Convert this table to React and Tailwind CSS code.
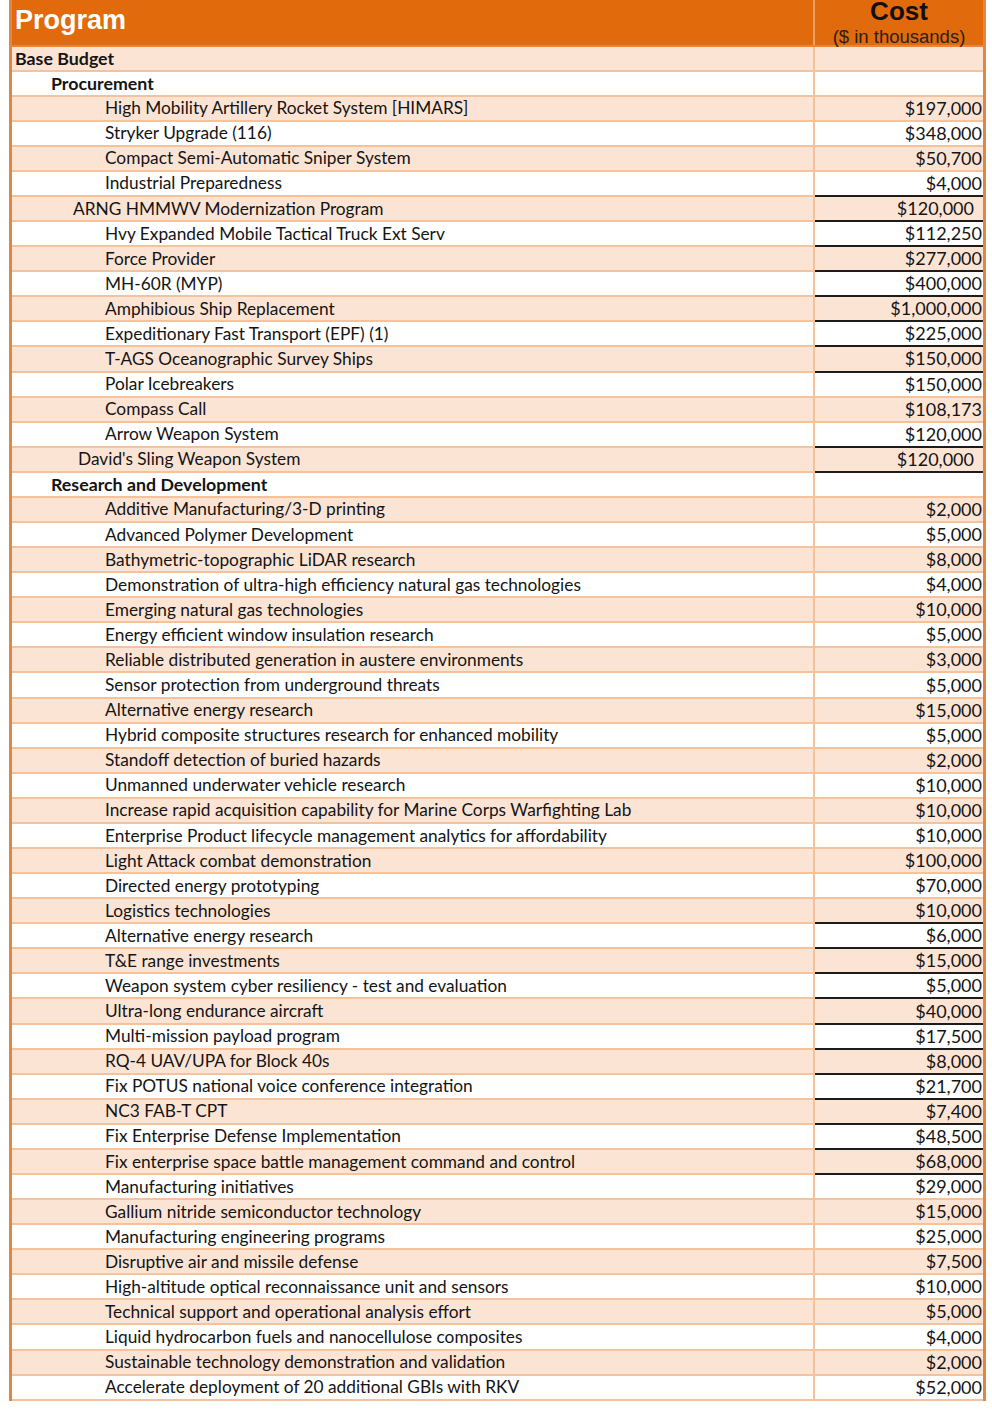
import React from "react";

// level: top / group / arng / sling, anything else = regular item
const rows = [
  { name: "Base Budget", level: "top", bold: true },
  { name: "Procurement", level: "group", bold: true },
  { name: "High Mobility Artillery Rocket System [HIMARS]", cost: "$197,000" },
  { name: "Stryker Upgrade (116)", cost: "$348,000" },
  { name: "Compact Semi-Automatic Sniper System", cost: "$50,700" },
  { name: "Industrial Preparedness", cost: "$4,000", dark: true },
  { name: "ARNG HMMWV Modernization Program", cost: "$120,000", level: "arng", pad: true, dark: true },
  { name: "Hvy Expanded Mobile Tactical Truck Ext Serv", cost: "$112,250", dark: true },
  { name: "Force Provider", cost: "$277,000", dark: true },
  { name: "MH-60R (MYP)", cost: "$400,000", dark: true },
  { name: "Amphibious Ship Replacement", cost: "$1,000,000", dark: true },
  { name: "Expeditionary Fast Transport (EPF) (1)", cost: "$225,000", dark: true },
  { name: "T-AGS Oceanographic Survey Ships", cost: "$150,000", dark: true },
  { name: "Polar Icebreakers", cost: "$150,000" },
  { name: "Compass Call", cost: "$108,173" },
  { name: "Arrow Weapon System", cost: "$120,000", dark: true },
  { name: "David's Sling Weapon System", cost: "$120,000", level: "sling", pad: true, dark: true },
  { name: "Research and Development", level: "group", bold: true },
  { name: "Additive Manufacturing/3-D printing", cost: "$2,000" },
  { name: "Advanced Polymer Development", cost: "$5,000" },
  { name: "Bathymetric-topographic LiDAR research", cost: "$8,000" },
  { name: "Demonstration of ultra-high efficiency natural gas technologies", cost: "$4,000" },
  { name: "Emerging natural gas technologies", cost: "$10,000" },
  { name: "Energy efficient window insulation research", cost: "$5,000" },
  { name: "Reliable distributed generation in austere environments", cost: "$3,000" },
  { name: "Sensor protection from underground threats", cost: "$5,000" },
  { name: "Alternative energy research", cost: "$15,000" },
  { name: "Hybrid composite structures research for enhanced mobility", cost: "$5,000" },
  { name: "Standoff detection of buried hazards", cost: "$2,000" },
  { name: "Unmanned underwater vehicle research", cost: "$10,000" },
  { name: "Increase rapid acquisition capability for Marine Corps Warfighting Lab", cost: "$10,000" },
  { name: "Enterprise Product lifecycle management analytics for affordability", cost: "$10,000" },
  { name: "Light Attack combat demonstration", cost: "$100,000" },
  { name: "Directed energy prototyping", cost: "$70,000" },
  { name: "Logistics technologies", cost: "$10,000", dark: true },
  { name: "Alternative energy research", cost: "$6,000", dark: true },
  { name: "T&E range investments", cost: "$15,000", dark: true },
  { name: "Weapon system cyber resiliency - test and evaluation", cost: "$5,000", dark: true },
  { name: "Ultra-long endurance aircraft", cost: "$40,000", dark: true },
  { name: "Multi-mission payload program", cost: "$17,500", dark: true },
  { name: "RQ-4 UAV/UPA for Block 40s", cost: "$8,000", dark: true },
  { name: "Fix POTUS national voice conference integration", cost: "$21,700", dark: true },
  { name: "NC3 FAB-T CPT", cost: "$7,400", dark: true },
  { name: "Fix Enterprise Defense Implementation", cost: "$48,500", dark: true },
  { name: "Fix enterprise space battle management command and control", cost: "$68,000", dark: true },
  { name: "Manufacturing initiatives", cost: "$29,000" },
  { name: "Gallium nitride semiconductor technology", cost: "$15,000" },
  { name: "Manufacturing engineering programs", cost: "$25,000" },
  { name: "Disruptive air and missile defense", cost: "$7,500" },
  { name: "High-altitude optical reconnaissance unit and sensors", cost: "$10,000" },
  { name: "Technical support and operational analysis effort", cost: "$5,000" },
  { name: "Liquid hydrocarbon fuels and nanocellulose composites", cost: "$4,000" },
  { name: "Sustainable technology demonstration and validation", cost: "$2,000" },
  { name: "Accelerate deployment of 20 additional GBIs with RKV", cost: "$52,000" },
];

const indent = {
  top: "pl-[3px]",
  group: "pl-[39px]",
  arng: "pl-[61px]",
  sling: "pl-[66px]",
};

export default function App() {
  return (
    <div className="min-h-screen bg-white pb-[10px] font-['Lato',sans-serif] text-[#141414]">
      <div className="ml-[9px] w-[977px] border-x-[3px] border-[#E08843]">
        {/* header */}
        <div className="flex h-[46.5px] border-b-2 border-[#E7843E] bg-[#E16B0C]">
          <div className="w-[803px] border-r-2 border-[#EE9F62] pl-[3px] pt-[7px] font-['Liberation_Sans',Arial,sans-serif] text-[27px] font-bold leading-none text-white">
            Program
          </div>
          <div className="flex flex-1 flex-col items-center font-['Liberation_Sans',Arial,sans-serif]">
            <span className="text-[26px] font-bold leading-[22px] text-[#111]">Cost</span>
            <span className="mt-[4px] text-[18.5px] leading-[22px] text-[#2e2018]">($ in thousands)</span>
          </div>
        </div>

        {rows.map((r, i) => (
          <div
            key={i}
            className={`flex h-[25.08px] ${i % 2 === 0 ? "bg-[#FCE4D5]" : "bg-white"}`}
          >
            <div
              className={`flex w-[803px] items-center border-r-2 border-b-2 border-[#F5C29C] ${
                r.bold ? "text-[17.8px] font-bold" : "text-[17.3px]"
              } ${indent[r.level] || "pl-[93px]"}`}
            >
              {r.name}
            </div>
            <div
              className={`flex flex-1 items-center justify-end border-b-2 text-[18px] ${
                r.pad ? "pr-[9px]" : "pr-[1px]"
              } ${r.dark ? "border-[#1c1c1c]" : "border-[#F5C29C]"}`}
            >
              {r.cost}
            </div>
          </div>
        ))}
      </div>
    </div>
  );
}
